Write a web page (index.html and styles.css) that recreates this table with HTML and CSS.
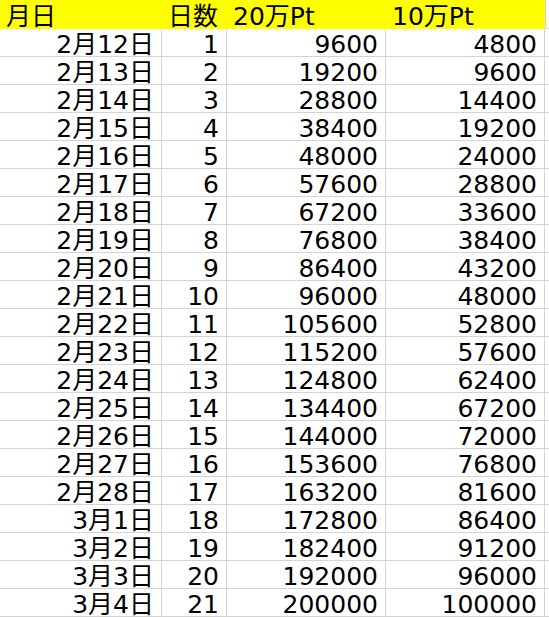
FILE: index.html
```html
<!DOCTYPE html>
<html lang="ja">
<head>
<meta charset="utf-8">
<title>Pt表</title>
<link rel="stylesheet" href="styles.css">
</head>
<body>
<table class="sheet">
<colgroup>
<col class="c-date"><col class="c-day"><col class="c-pt"><col class="c-pt"><col class="c-rest">
</colgroup>
<thead>
<tr class="head"><th>月日</th><th>日数</th><th>20万Pt</th><th>10万Pt</th><th class="blank"></th></tr>
</thead>
<tbody>
<tr><td>2月12日</td><td>1</td><td>9600</td><td>4800</td><td class="blank"></td></tr>
<tr><td>2月13日</td><td>2</td><td>19200</td><td>9600</td><td class="blank"></td></tr>
<tr><td>2月14日</td><td>3</td><td>28800</td><td>14400</td><td class="blank"></td></tr>
<tr><td>2月15日</td><td>4</td><td>38400</td><td>19200</td><td class="blank"></td></tr>
<tr><td>2月16日</td><td>5</td><td>48000</td><td>24000</td><td class="blank"></td></tr>
<tr><td>2月17日</td><td>6</td><td>57600</td><td>28800</td><td class="blank"></td></tr>
<tr><td>2月18日</td><td>7</td><td>67200</td><td>33600</td><td class="blank"></td></tr>
<tr><td>2月19日</td><td>8</td><td>76800</td><td>38400</td><td class="blank"></td></tr>
<tr><td>2月20日</td><td>9</td><td>86400</td><td>43200</td><td class="blank"></td></tr>
<tr><td>2月21日</td><td>10</td><td>96000</td><td>48000</td><td class="blank"></td></tr>
<tr><td>2月22日</td><td>11</td><td>105600</td><td>52800</td><td class="blank"></td></tr>
<tr><td>2月23日</td><td>12</td><td>115200</td><td>57600</td><td class="blank"></td></tr>
<tr><td>2月24日</td><td>13</td><td>124800</td><td>62400</td><td class="blank"></td></tr>
<tr><td>2月25日</td><td>14</td><td>134400</td><td>67200</td><td class="blank"></td></tr>
<tr><td>2月26日</td><td>15</td><td>144000</td><td>72000</td><td class="blank"></td></tr>
<tr><td>2月27日</td><td>16</td><td>153600</td><td>76800</td><td class="blank"></td></tr>
<tr><td>2月28日</td><td>17</td><td>163200</td><td>81600</td><td class="blank"></td></tr>
<tr><td>3月1日</td><td>18</td><td>172800</td><td>86400</td><td class="blank"></td></tr>
<tr><td>3月2日</td><td>19</td><td>182400</td><td>91200</td><td class="blank"></td></tr>
<tr><td>3月3日</td><td>20</td><td>192000</td><td>96000</td><td class="blank"></td></tr>
<tr><td>3月4日</td><td>21</td><td>200000</td><td>100000</td><td class="blank"></td></tr>
</tbody>
</table>
</body>
</html>
```
FILE: styles.css
```css
html, body {
  margin: 0;
  padding: 0;
  background: #ffffff;
}

.sheet {
  table-layout: fixed;
  border-collapse: separate;
  border-spacing: 0;
  width: 549px;
  font-family: "DejaVu Sans", "Noto Sans CJK JP", sans-serif;
  font-size: 25px;
  color: #000000;
}

.c-date { width: 162px; }
.c-day { width: 65px; }
.c-pt { width: 159px; }
.c-rest { width: auto; }

.sheet th,
.sheet td {
  box-sizing: border-box;
  height: 28px;
  padding: 4px 7px 0 5px;
  line-height: 23px;
  white-space: nowrap;
  border-right: 1px solid #d4d4d4;
  border-bottom: 1px solid #d4d4d4;
}

.sheet td {
  text-align: right;
}

.head th {
  height: 29px;
  padding-left: 6px;
  padding-top: 4px;
  text-align: left;
  font-weight: normal;
  background: #ffff00;
  border-right: none;
  border-bottom: 1px solid #ffff00;
}

.head th.blank {
  background: #ffffff;
  border-left: 1px solid #d4d4d4;
  border-bottom: 1px solid #d4d4d4;
}

.sheet td.blank {
  border-right: none;
}
```
